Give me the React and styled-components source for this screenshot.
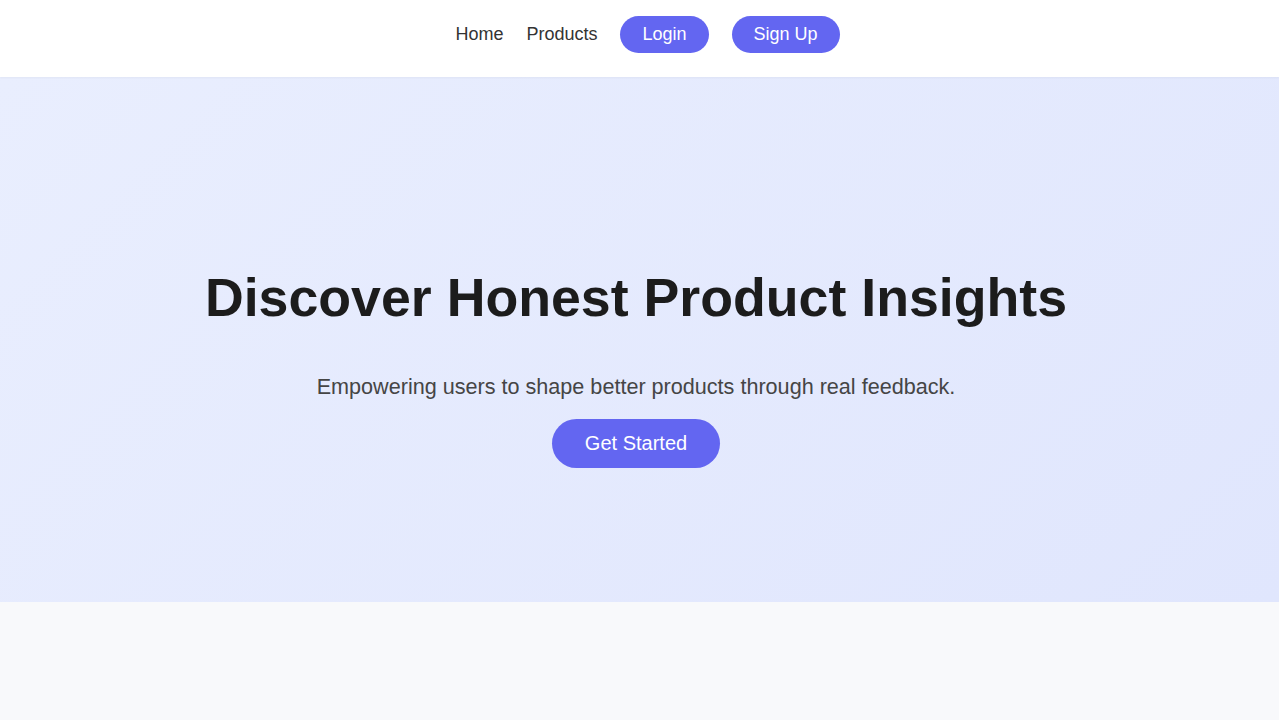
import React from "react";
import styled, { createGlobalStyle } from "styled-components";

const GlobalStyle = createGlobalStyle`
  * {
    box-sizing: border-box;
  }
  body {
    margin: 0;
    background: #f8f9fb;
    font-family: "Liberation Sans", Arial, sans-serif;
  }
`;

const NavBar = styled.nav`
  display: flex;
  justify-content: center;
  align-items: center;
  gap: 23px;
  height: 77px;
  padding: 0 0 8px 16px;
  background-color: #ffffff;
  box-shadow: 0 1px 2px rgba(0, 0, 0, 0.04);
  position: relative;
  z-index: 1;
`;

const NavLink = styled.a`
  font-size: 18px;
  color: #333333;
  text-decoration: none;
  cursor: pointer;
`;

const PillButton = styled.button`
  font-family: inherit;
  font-size: ${props => (props.large ? "20px" : "18px")};
  line-height: ${props => (props.large ? "23px" : "21px")};
  padding: ${props => (props.large ? "13px 33px" : "8px 22px")};
  color: #ffffff;
  background-color: #6366f1;
  border: none;
  border-radius: 999px;
  cursor: pointer;
`;

const Hero = styled.section`
  display: flex;
  flex-direction: column;
  align-items: center;
  padding: 189px 39px 134px 32px;
  background: linear-gradient(135deg, #e9eefe 0%, #e0e6fd 100%);
  text-align: center;
`;

const Title = styled.h1`
  margin: 0 0 46px;
  font-size: 53.7px;
  line-height: 62px;
  font-weight: 700;
  color: #1c1c1c;
`;

const Subtitle = styled.p`
  margin: 0 0 20px;
  font-size: 21.6px;
  line-height: 25px;
  color: #454545;
`;

const Below = styled.section`
  min-height: 118px;
  background-color: #f8f9fb;
`;

export default function App() {
  return (
    <>
      <GlobalStyle />
      <NavBar>
        <NavLink>Home</NavLink>
        <NavLink>Products</NavLink>
        <PillButton>Login</PillButton>
        <PillButton>Sign Up</PillButton>
      </NavBar>
      <Hero>
        <Title>Discover Honest Product Insights</Title>
        <Subtitle>
          Empowering users to shape better products through real feedback.
        </Subtitle>
        <PillButton large>Get Started</PillButton>
      </Hero>
      <Below />
    </>
  );
}
